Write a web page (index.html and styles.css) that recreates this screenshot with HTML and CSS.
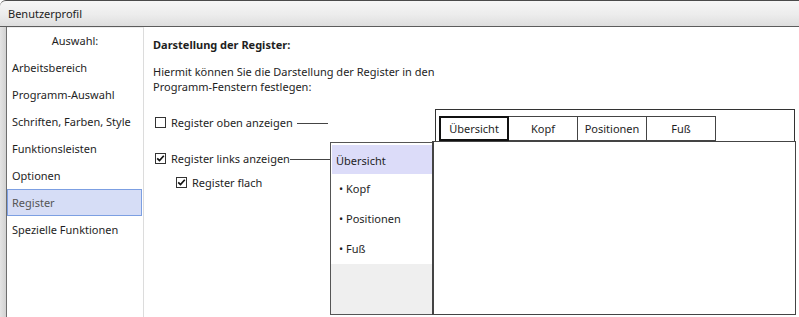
FILE: index.html
```html
<!DOCTYPE html>
<html lang="de">
<head>
<meta charset="utf-8">
<title>Benutzerprofil</title>
<link rel="stylesheet" href="styles.css">
</head>
<body>
<div class="window">
  <div class="titlebar"><span class="title">Benutzerprofil</span></div>
  <div class="body">
    <div class="frame"></div>
    <div class="sidebar">
      <div class="side-head">Auswahl:</div>
      <div class="side-item">Arbeitsbereich</div>
      <div class="side-item">Programm-Auswahl</div>
      <div class="side-item">Schriften, Farben, Style</div>
      <div class="side-item">Funktionsleisten</div>
      <div class="side-item">Optionen</div>
      <div class="side-item selected">Register</div>
      <div class="side-item">Spezielle Funktionen</div>
    </div>
    <div class="content">
      <div class="heading">Darstellung der Register:</div>
      <div class="intro">Hiermit können Sie die Darstellung der Register in den<br>Programm-Fenstern festlegen:</div>
      <div class="config">
        <div class="options">
          <div class="opt opt-top">
            <span class="box"></span>
            <span class="label">Register oben anzeigen</span>
            <span class="connector gap"></span>
          </div>
          <div class="opt opt-left">
            <span class="box"><svg width="9" height="9" viewBox="0 0 9 9"><path d="M1.2 4.3 L3.5 6.6 L7.8 1.8" fill="none" stroke="#111" stroke-width="1.7"/></svg></span>
            <span class="label">Register links anzeigen</span>
            <span class="connector"></span>
          </div>
          <div class="opt opt-flat">
            <span class="box"><svg width="9" height="9" viewBox="0 0 9 9"><path d="M1.2 4.3 L3.5 6.6 L7.8 1.8" fill="none" stroke="#111" stroke-width="1.7"/></svg></span>
            <span class="label">Register flach</span>
          </div>
        </div>
        <div class="preview">
          <div class="corner"></div>
          <div class="tabstrip">
            <div class="tab active">Übersicht</div>
            <div class="tab">Kopf</div>
            <div class="tab">Positionen</div>
            <div class="tab">Fuß</div>
          </div>
          <div class="sidetabs">
            <div class="stab active">Übersicht</div>
            <div class="stab">• Kopf</div>
            <div class="stab">• Positionen</div>
            <div class="stab">• Fuß</div>
            <div class="stab-fill"></div>
          </div>
          <div class="mainpanel"></div>
        </div>
      </div>
    </div>
  </div>
</div>
</body>
</html>
```
FILE: styles.css
```css
* { box-sizing: border-box; }
html, body { margin: 0; padding: 0; background: #fff; }
body {
  font-family: "Noto Sans", "Open Sans", sans-serif;
  font-size: 11px;
  color: #1e1e1e;
}
.window {
  width: 799px;
  height: 317px;
  display: flex;
  flex-direction: column;
  overflow: hidden;
}
.titlebar {
  height: 27px;
  flex: none;
  border-top: 1px solid #4a4a4a;
  border-bottom: 1px solid #5c5c5c;
  border-top-left-radius: 6px;
  background: linear-gradient(to bottom, #f6f6f6 0%, #ececec 55%, #dedede 100%);
  display: flex;
  align-items: center;
  padding-left: 8px;
}
.title { font-size: 11px; color: #222; }
.body {
  flex: 1;
  display: flex;
  min-height: 0;
}
.frame {
  width: 7px;
  flex: none;
  background: linear-gradient(to right, #e4e4e4, #d2d2d2);
  border-right: 1px solid #6e6e6e;
}
.sidebar {
  width: 137px;
  flex: none;
  border-right: 1px solid #dcdcdc;
  border-top: 1px solid #eeeeee;
  display: flex;
  flex-direction: column;
}
.side-head {
  height: 26px;
  line-height: 26px;
  text-align: center;
}
.side-item {
  height: 27px;
  line-height: 27px;
  padding-left: 5px;
  margin-right: 1px;
  white-space: nowrap;
}
.side-item.selected {
  background: #d6ddf6;
  border: 1px solid #7c9fe2;
  line-height: 25px;
  padding-left: 4px;
  color: #555;
}
.content {
  flex: 1;
  padding-left: 9px;
  display: flex;
  flex-direction: column;
}
.heading {
  font-weight: bold;
  line-height: 16px;
  margin-top: 10px;
}
.intro {
  line-height: 15px;
  margin-top: 11px;
}
.config {
  margin-top: 15px;
  display: flex;
}
.options {
  width: 177px;
  flex: none;
  padding-top: 4px;
  display: flex;
  flex-direction: column;
}
.opt {
  height: 19px;
  display: flex;
  align-items: center;
}
.opt-left { margin-top: 17px; }
.opt-flat { margin-top: 5px; padding-left: 21px; }
.box {
  width: 11px;
  height: 11px;
  flex: none;
  border: 1px solid #333;
  background: #fff;
  margin-left: 2px;
  margin-right: 5px;
  display: flex;
  align-items: center;
  justify-content: center;
}
.label { white-space: nowrap; }
.connector {
  flex: 1;
  height: 1px;
  background: #444;
  margin-top: 1px;
}
.connector.gap { margin-left: 4px; margin-right: 2px; }
.preview {
  width: 466px;
  display: grid;
  grid-template-columns: 102px 1fr;
  grid-template-rows: 32px 174px;
}
.tabstrip {
  margin-left: 3px;
  margin-right: 1px;
  border: 1px solid #333;
  border-bottom: none;
  padding: 6px 0 0 3px;
  display: flex;
  align-items: flex-start;
}
.tab {
  width: 70px;
  height: 25px;
  border: 1px solid #444;
  margin-left: -1px;
  text-align: center;
  line-height: 23px;
  background: #fff;
}
.tab:first-child { margin-left: 0; }
.tab.active {
  border: 2px solid #111;
  line-height: 21px;
  position: relative;
  z-index: 1;
}
.sidetabs {
  margin-top: 1px;
  border: 1px solid #555;
  border-right: none;
  display: flex;
  flex-direction: column;
  padding: 2px 0 0 1px;
}
.stab {
  height: 30px;
  line-height: 30px;
  padding-left: 7px;
  white-space: nowrap;
}
.stab.active {
  background: #dcdcf9;
  padding-left: 4px;
  height: 29px;
  line-height: 31px;
}
.stab-fill {
  flex: 1;
  background: #efefef;
  margin-left: -1px;
}
.mainpanel {
  border: 1px solid #444;
  border-left: 2px solid #444;
  background: #fff;
}
```
